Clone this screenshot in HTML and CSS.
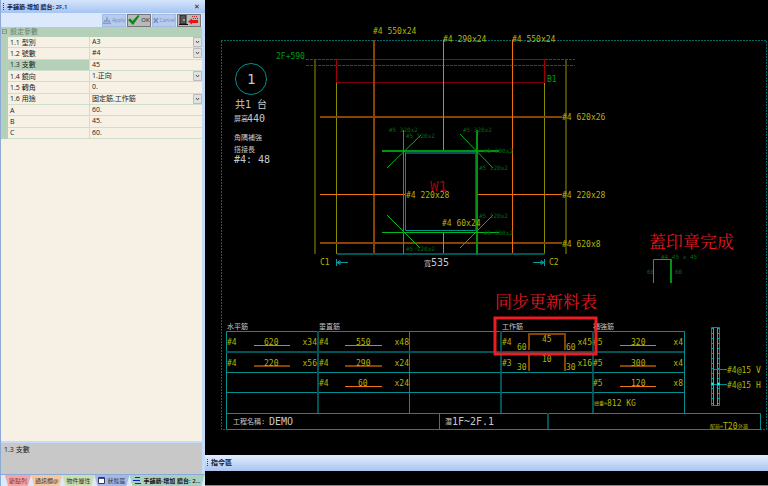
FILE: index.html
```
<!DOCTYPE html>
<html>
<head>
<meta charset="utf-8">
<title>DEMO</title>
<link rel="stylesheet" href="styles.css">
</head>
<body>
<aside class="panel">
  <header class="bar panel-title">
    <span class="grip"></span>
    <h1>手鋪筋-增加 牆台: 2F,1</h1>
    <button class="close" type="button">✕</button>
  </header>
  <div class="toolbar">
    <button type="button" class="tool off">
      <svg width="9" height="9" viewBox="0 0 9 9"><path d="M0 8h9M1 8V6h7v2M3 6l1.500-4 1.500 4M1 4l2 1M8 4L6 5M4.500 0v2" stroke="#7d91b8" fill="none"/></svg>Apply
    </button>
    <button type="button" class="tool ok">
      <svg width="12" height="10" viewBox="0 0 12 10"><path d="M0 5l2.500-1.500L4.500 6 10 0l1.500 1L5 10z" fill="#0a8a14"/></svg>OK
    </button>
    <button type="button" class="tool off">
      <svg width="8" height="9" viewBox="0 0 8 9"><path d="M1 1l6 7M7 1L1 8" stroke="#6f87bd" stroke-width="2"/></svg>Cancel
    </button>
    <button type="button" class="tool exit">
      <svg width="9" height="10" viewBox="0 0 9 10"><path d="M1 0h6v9H1z" fill="#555" stroke="#222"/><path d="M0 9.500h9" stroke="#111"/><path d="M5 4v2" stroke="#ddd"/></svg>
      <svg width="11" height="10" viewBox="0 0 11 10"><path d="M0 6.500l4-3v1.500h6v3H4v1.500z" fill="#f01010"/><path d="M4 1.500h6M5 3.500h5" stroke="#a22" stroke-dasharray="1 1"/></svg>
    </button>
  </div>
  <div class="props">
    <table>
      <colgroup><col class="c-gutter"><col class="c-name"><col></colgroup>
      <thead><tr><th class="gutter"><span class="box">−</span></th><th colspan="2" class="group">設定參數</th></tr></thead>
      <tbody>
      <tr><td class="gutter"></td><th><label for="p1">1.1 型別</label></th><td><select id="p1"><option>A3</option></select></td></tr>
      <tr><td class="gutter"></td><th><label for="p2">1.2 號數</label></th><td><select id="p2"><option>#4</option></select></td></tr>
      <tr class="selected"><td class="gutter"></td><th><label for="p3">1.3 支數</label></th><td><input id="p3" value="45"></td></tr>
      <tr><td class="gutter"></td><th><label for="p4">1.4 鏡向</label></th><td><select id="p4"><option>1.正向</option></select></td></tr>
      <tr><td class="gutter"></td><th><label for="p5">1.5 轉角</label></th><td><input id="p5" value="0."></td></tr>
      <tr><td class="gutter"></td><th><label for="p6">1.6 用途</label></th><td><select id="p6"><option>固定筋,工作筋</option></select></td></tr>
      <tr><td class="gutter"></td><th><label for="pa">A</label></th><td><input id="pa" value="60."></td></tr>
      <tr><td class="gutter"></td><th><label for="pb">B</label></th><td><input id="pb" value="45."></td></tr>
      <tr><td class="gutter"></td><th><label for="pc">C</label></th><td><input id="pc" value="60."></td></tr>
      </tbody>
    </table>
  </div>
  <p class="hint">1.3 支數</p>
  <nav class="tabs">
    <a href="#n1" class="tab pink">節點列</a>
    <a href="#n2" class="tab orange">通訊欄@</a>
    <a href="#n3" class="tab lime">物件屬性</a>
    <a href="#n4" class="tab blue"><svg width="7" height="7" viewBox="0 0 7 7"><path d="M.5.5h6v6h-6z" fill="#fff" stroke="#335"/><path d="M1 1.500h5" stroke="#44a"/></svg>狀態區</a>
    <a href="#n5" class="tab active"><svg width="8" height="7" viewBox="0 0 8 7"><path d="M2 .5h5M0 3.500h7M2 6.500h6" stroke="#1220c0"/></svg><span>手鋪筋-增加 牆台: 2...</span></a>
  </nav>
</aside>
<main class="work">
  <svg class="drawing" viewBox="205 0 563 455" preserveAspectRatio="xMinYMin meet">
    <!-- sheet frame -->
    <g class="frame"><path d="M221 40.500H766.500V429.500H221.500V40"/></g>
    <!-- levels and beam -->
    <path class="level" d="M306 59.500H337M545 59.500H575M306 65.500H575"/>
    <path class="beam" d="M336.500 83V59.500H544.500V83"/>
    <path class="beam dim" d="M337 82.500H544"/>
    <!-- wall edges -->
    <path class="edge wide" d="M315 60V254M566 60V254"/>
    <path class="edge" d="M336.500 83V254M544.500 83V254"/>
    <!-- main bars -->
    <path class="bar-o wide" d="M374 40V254M320 117H562M320 243H562"/>
    <path class="bar-o" d="M512.500 40V254M443.500 40V153M443.500 232V255M320 194.500H405M476 194.500H562"/>
    <path class="teal wide" d="M337 254H545"/>
    <!-- opening -->
    <path class="teal" d="M405.500 152.500H475.500V230.500H405.500z"/>
    <path class="teal wide" d="M406 153H476M476 153V230"/>
    <path class="trim wide" d="M382 151H499M477 130V254"/>
    <path class="trim" d="M382 232.500H499M403.500 130V254M387 168L421 135M460 134L493 168M387 215L420 248M493 215L460 248"/>
    <g class="t6 green">
      <text x="389" y="132">#5 320x2</text><text x="406" y="138">#5 120x2</text>
      <text x="463" y="132">#5 320x2</text><text x="484" y="153">#5 300x2</text>
      <text x="479" y="170">#5 120x2</text><text x="479" y="218">#5 120x2</text>
      <text x="484" y="235">#5 300x2</text><text x="406" y="251">#5 120x2</text>
      <text x="661" y="259">#4 45 x 45</text><text x="647" y="274">60</text><text x="675" y="274">60</text>
    </g>
    <text class="w1" x="430" y="191">W1</text>
    <g class="t8 yellow">
      <text x="373" y="34">#4 550x24</text><text x="443" y="42">#4 290x24</text><text x="512" y="42">#4 550x24</text>
      <text x="562" y="120">#4 620x26</text><text x="562" y="198">#4 220x28</text><text x="562" y="247">#4 620x8</text>
      <text x="406" y="198">#4 220x28</text><text x="442" y="226">#4 60x24</text>
      <text x="320" y="265">C1</text><text x="549" y="265">C2</text>
    </g>
    <g class="t8 green lit"><text x="276" y="59">2F+590</text><text x="547" y="82">B1</text></g>
    <path class="arrow" d="M337 262.500H348M336.500 259V266M337 262.500L340 260.500V264.500zM533 262.500H545M544.500 259V266M544 262.500L541 260.500V264.500z"/>
    <!-- view notes -->
    <circle class="teal" cx="251" cy="79" r="15.500"/>
    <g class="note">
      <text class="t14" x="247" y="84">1</text>
      <text class="t10" x="235" y="108">共1 台</text>
      <text class="t7" x="234" y="121">屏高</text><text class="t10" x="247" y="122">440</text>
      <text class="t7" x="234" y="140">角隅補強</text>
      <text class="t7" x="234" y="152">搭接長</text>
      <text class="t10" x="234" y="163">#4: 48</text>
      <text class="t7" x="424" y="266">寬</text><text class="t10" x="431" y="266">535</text>
      <text class="t7" x="227" y="329">水平筋</text><text class="t7" x="319" y="329">垂直筋</text>
      <text class="t7" x="502" y="329">工作筋</text><text class="t7" x="593" y="329">補強筋</text>
      <text class="t7" x="233" y="424">工程名稱:</text><text class="t10" x="269" y="425">DEMO</text>
      <text class="t7" x="445" y="424">潛</text><text class="t10" x="452" y="425">1F~2F.1</text>
    </g>
    <!-- stamp -->
    <path class="trim" d="M653.500 283V259.500H671"/><path class="trim wide" d="M671 259V283"/>
    <text class="t17" x="649" y="248">蓋印章完成</text>
    <text class="t17" x="495" y="308">同步更新料表</text>
    <!-- schedule grid -->
    <path class="teal" d="M226.500 429V331.500H684.500V413M226 372.500H684M226 392.500H684M226 413.500H760.500V429M409.500 331V413M439.500 413V429M226 429.500H761"/>
    <path class="teal wide" d="M226 352H684M318 331V413M501 331V413M593 331V413M548 413V429"/>
    <path class="bar-o" d="M254 345.500H290M345 345.500H382M345 386.500H382M620 345.500H656M620 386.500H656"/>
    <path class="bar-o wide" d="M254 366H290M345 366H382M620 366H656M529 350V334H565V350M529 355V371M565 355V371"/>
    <g class="t8 yellow">
      <text x="227" y="345">#4</text><text x="264" y="345">620</text><text class="end" x="317" y="345">x34</text>
      <text x="227" y="366">#4</text><text x="264" y="366">220</text><text class="end" x="317" y="366">x56</text>
      <text x="319" y="345">#4</text><text x="356" y="345">550</text><text class="end" x="409" y="345">x48</text>
      <text x="319" y="366">#4</text><text x="356" y="366">290</text><text class="end" x="409" y="366">x24</text>
      <text x="319" y="386">#4</text><text x="358" y="386">60</text><text class="end" x="409" y="386">x24</text>
      <text x="502" y="345">#4</text><text x="517" y="350">60</text><text x="542" y="342">45</text><text x="566" y="350">60</text><text class="end" x="592" y="345">x45</text>
      <text x="502" y="366">#3</text><text x="517" y="370">30</text><text x="542" y="362">10</text><text x="566" y="370">30</text><text class="end" x="592" y="366">x16</text>
      <text x="593" y="345">#5</text><text x="631" y="345">320</text><text class="end" x="683" y="345">x4</text>
      <text x="593" y="366">#5</text><text x="631" y="366">300</text><text class="end" x="683" y="366">x4</text>
      <text x="593" y="386">#5</text><text x="631" y="386">120</text><text class="end" x="683" y="386">x8</text>
      <text class="t5" x="594" y="405">總重=</text><text x="607" y="406">812 KG</text>
      <text class="t5" x="710" y="428">配筋=</text><text x="723" y="429">T20</text><text class="t5" x="738" y="428">外牆</text>
      <text x="727" y="373">#4@15 V</text><text x="727" y="388">#4@15 H</text>
    </g>
    <!-- wall section -->
    <path class="teal" d="M711.500 327.500H719.500V405.500H711.500z"/>
    <path class="bar-o" d="M713.500 328V405M717.500 328V405"/>
    <path class="ties" d="M712 328V405M719 328V405"/>
    <path class="teal" d="M714 369.500H727M713 384.500H727"/>
    <circle class="dot" cx="712.500" cy="384" r="1"/><circle class="dot" cx="718.500" cy="384" r="1"/>
    <rect class="mark" x="495" y="318" width="101" height="36"/>
  </svg>
  <header class="bar command"><span class="grip"></span><h2>指令區</h2></header>
  <div class="console"></div>
</main>
</body>
</html>
```

FILE: styles.css
```
* { box-sizing: border-box; }
body {
  margin: 0;
  height: 100vh;
  display: grid;
  grid-template-columns: 205px 1fr;
  background: #000;
  font: 7px/10px "Open Sans", "Noto Sans CJK TC", sans-serif;
  color: #222;
  overflow: hidden;
}
h1, h2, p { margin: 0; font: inherit; }
h1, h2 { color: #10203c; font-size: 6px; font-weight: 600; flex: 1; }
button, input, select { font: inherit; color: inherit; border: 0; background: none; margin: 0; padding: 0; }

.panel {
  display: flex;
  flex-direction: column;
  min-height: 0;
  background: #c5dbf8;
  border-left: 1px solid #8da9d6;
  padding-right: 3px;
}
.bar { display: flex; align-items: center; gap: 3px; padding: 0 3px 0 2px; background: linear-gradient(#e3eefe, #a9c5f0); }
.panel-title { height: 13px; margin-right: -3px; background: linear-gradient(#d5e5fc, #a5c4f2); }
.grip { width: 1px; height: 8px; background: repeating-linear-gradient(#345 0 1px, transparent 1px 2px); }
.close { width: 10px; font-size: 7px; }

.toolbar { display: flex; justify-content: flex-end; align-items: center; gap: 1px; height: 14px; padding-right: 1px; background: #dce9fc; }
.tool { display: flex; align-items: center; justify-content: center; gap: 1px; height: 13px; width: 24px; font-size: 6px; background: #b9b9bb; border: 1px solid #777; }
.off { background: #b7cbee; border-color: #a5bbe2; color: #7088b8; font-size: 5px; }
.exit { gap: 0; }

.props { flex: 1; background: #f6f1e4; min-height: 0; }
table { width: 100%; height: 112px; border-collapse: separate; border-spacing: 0; table-layout: fixed; }
.c-gutter { width: 7px; }
.c-name { width: 82px; }
td, th { padding: 0; border-bottom: 1px solid #cfdfcb; font-weight: 400; text-align: left; line-height: 9px; }
th { padding-left: 2px; }
thead th { background: #b5d0b9; color: #6b7d6c; border-color: #b5d0b9; }
td.gutter, th.gutter { padding: 0; background: #b5d0b9; border-color: #b5d0b9; }
tbody th { border-right: 1px solid #cfdfcb; }
.selected th { background: #b5d0b9; }
.box { display: block; width: 5px; height: 5px; margin-left: 1px; border: 1px solid #8a9a8b; line-height: 3px; font-size: 5px; }
td input, td select { display: block; width: 100%; height: 10px; padding-left: 2px; line-height: 10px; outline: 0; }
td select {
  appearance: none;
  background: url("data:image/svg+xml,%3Csvg xmlns='http://www.w3.org/2000/svg' width='9' height='10'%3E%3Cpath d='M.5.5h8v9h-8z' fill='%23e1e1e1' stroke='%23bbb'/%3E%3Cpath d='M3 4l1.500 2L6 4' fill='none' stroke='%23555'/%3E%3C/svg%3E") right center no-repeat;
}

.hint { height: 31px; margin-top: 2px; padding: 2px 3px; background: #c8c8c8; }
.tabs { display: flex; height: 12px; padding-left: 4px; background: #dce9fb; border-top: 1px solid #8da9d6; margin-right: -3px; font-size: 6px; }
.tab { display: flex; align-items: center; gap: 2px; padding: 0 4px; color: #333; text-decoration: none; white-space: nowrap; clip-path: polygon(0 0, 100% 0, calc(100% - 3px) 100%, 3px 100%); }
.pink { background: #f3a6a6; color: #833; }
.orange { background: #f6c79c; }
.lime { background: #cbe0ae; }
.blue { background: #a5b8e6; }
.active { background: #a8d0c0; color: #112; font-weight: 600; }

.work { display: flex; flex-direction: column; min-width: 0; background: #000; }
.drawing { display: block; width: 100%; flex: 1; min-height: 0; }
.command { height: 16px; }
.command h2 { font-size: 7px; }
.console { height: 15px; border-bottom: 1px solid #8a8a8a; }

.drawing path, .drawing circle, .drawing rect { fill: none; stroke-width: 1px; }
.drawing .wide { stroke-width: 2px; }
.frame path { stroke: #006868; stroke-dasharray: 2 1; }
.drawing .level { stroke: #9a009a; stroke-dasharray: 3 1; }
.beam { stroke: #a00008; }
.dim { stroke: #780006; }
.edge { stroke: #8c8c00; }
.edge.wide { stroke: #4c4800; }
.bar-o { stroke: #ef7010; }
.bar-o.wide { stroke: #8a4200; }
.teal { stroke: #009090; }
.teal.wide { stroke: #005456; }
.trim { stroke: #00b818; }
.trim.wide { stroke: #009412; }
.arrow { stroke: #009ca0; }
.drawing .ties { stroke: #00a0a0; stroke-width: 2px; stroke-dasharray: 1 4; }
.drawing .dot { fill: #00ffff; stroke: #00ffff; }
.drawing .mark { stroke: #ed1c24; stroke-width: 3px; }
.drawing text { font-family: "DejaVu Sans Mono", "Noto Sans CJK TC", monospace; white-space: pre; }
.drawing .t5 { font-size: 5px; }
.t6 { font-size: 6px; }
.t7 { font-size: 7px; }
.t8 { font-size: 8px; }
.t10 { font-size: 10px; }
.t14 { font-size: 14px; }
.drawing .t17 { font-size: 17px; fill: #e01820; font-family: "Noto Serif CJK TC", "Noto Sans CJK TC", serif; }
.w1 { font-size: 14px; fill: #a00008; }
.yellow { fill: #b4b400; }
.green { fill: #006c10; }
.green.lit { fill: #009c18; }
.note { fill: #c8c8c8; }
.end { text-anchor: end; }
```
